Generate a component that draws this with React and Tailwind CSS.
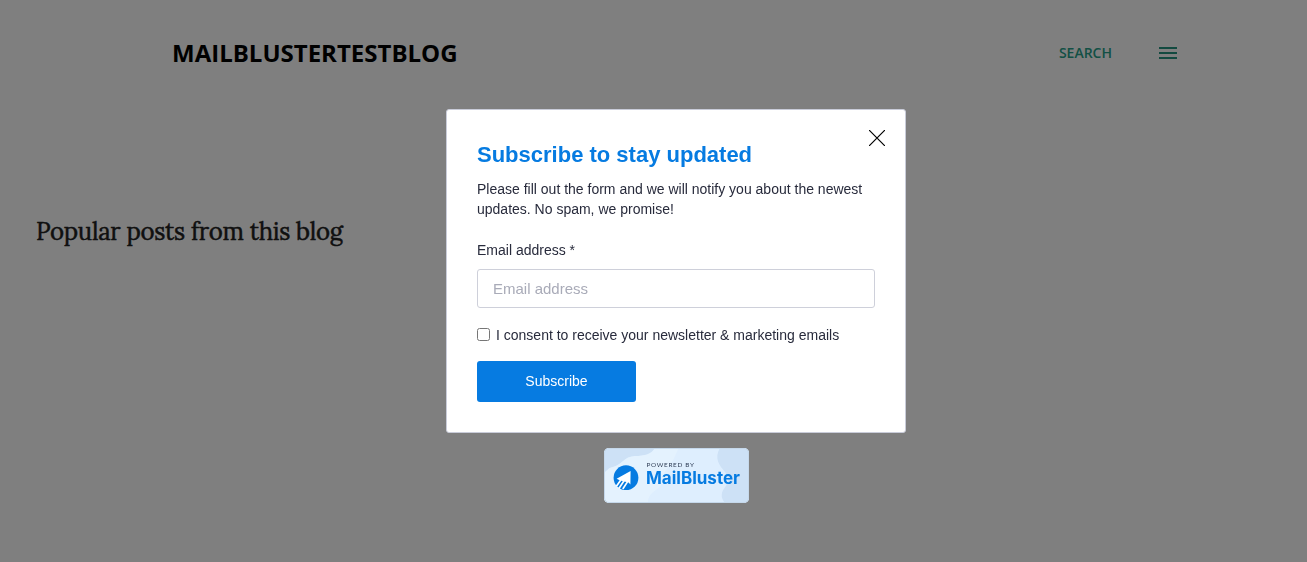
import { useState } from "react";

function BlogHeader() {
  return (
    <header className="flex items-center justify-between pt-[33px] pl-[172px] pr-[127px]">
      <h1 className="font-['Open_Sans',sans-serif] text-[24px] leading-10 font-bold uppercase text-black">
        MailBlusterTestBlog
      </h1>
      <div className="flex items-center gap-11">
        <button
          type="button"
          className="font-['Open_Sans',sans-serif] text-sm font-semibold uppercase text-[#26a08a]"
        >
          Search
        </button>
        <svg className="size-6" viewBox="0 0 24 24" fill="#269480">
          <path d="M3 18h18v-2H3v2zm0-5h18v-2H3v2zm0-7v2h18V6H3z" />
        </svg>
      </div>
    </header>
  );
}

function PoweredBy() {
  return (
    <a className="block w-[145px] h-[55px]">
      <svg width="145" height="55" viewBox="0 0 145 55">
        <clipPath id="badge">
          <rect width="145" height="55" rx="5" />
        </clipPath>
        <g clipPath="url(#badge)">
          <rect width="145" height="55" fill="#deeefe" />
          <path d="M0 0h51C48 6 40 8 31 8C19 9 18 17 9 19C4 20 3 23 0 25z" fill="#cde1f6" />
          <path
            d="M51 0C47 7 40 8 31 8C19 9 18 17 9 19C4 20 3 23 0 25V55H44C44 42 57 43 58 33C59 22 65 20 68 14C71 9 72 5 75 0z"
            fill="#e4f2fe"
          />
          <path d="M116 0C110 10 115 17 121 24C129 34 120 38 118 45C117 50 119 52 121 55H145V0z" fill="#cde1f6" />
        </g>
        <rect x="0.5" y="0.5" width="144" height="54" rx="4.5" fill="none" stroke="#c5d8eb" />
        <circle cx="22" cy="29.7" r="12.4" fill="#067be1" />
        <path d="M26.6 23L12.6 30.7L16.2 32.4L24.6 34.6L26.4 36.4z" fill="#fff" />
        <path
          d="M16.8 32L12.4 38.2M20.2 32.6L14.9 40.4M23.6 33.6L18.8 41"
          stroke="#fff"
          strokeWidth="1.7"
        />
        <text
          x="42.5"
          y="18.7"
          textLength="47.5"
          fontFamily="Lato, sans-serif"
          fontSize="6.4"
          fontWeight="400"
          fill="#2f3d55"
        >
          POWERED BY
        </text>
        <text
          x="42"
          y="36"
          textLength="94"
          lengthAdjust="spacingAndGlyphs"
          fontFamily="Inter, sans-serif"
          fontSize="17"
          fontWeight="700"
          fill="#067be1"
        >
          MailBluster
        </text>
      </svg>
    </a>
  );
}

function SubscribeForm() {
  const [email, setEmail] = useState("");
  const [consent, setConsent] = useState(false);

  return (
    <form
      onSubmit={(e) => e.preventDefault()}
      className="relative w-[460px] h-[324px] bg-white border border-[#c9ccd9] rounded-[3px] px-[30px] pt-[30px] text-sm leading-5 text-[#282b3c]"
    >
      <button type="button" aria-label="Close" className="absolute top-5 right-5">
        <svg width="16" height="16" viewBox="0 0 16 16" stroke="#000" strokeWidth="1.2">
          <path d="M0 0L16 16M16 0L0 16" />
        </svg>
      </button>
      <h2 className="text-[22px] leading-[30px] font-bold text-[#067be1]">Subscribe to stay updated</h2>
      <p className="mt-[9px]">
        Please fill out the form and we will notify you about the newest updates. No spam, we promise!
      </p>
      <label htmlFor="email" className="block mt-[21px]">
        Email address *
      </label>
      <input
        id="email"
        type="email"
        value={email}
        onChange={(e) => setEmail(e.target.value)}
        placeholder="Email address"
        className="block mt-[9px] w-full h-[39px] px-[15px] text-[15px] border border-[#ced0da] rounded-[3px] placeholder:text-[#a9abb8]"
      />
      <label className="flex items-center gap-1.5 mt-[17px]">
        <input
          type="checkbox"
          checked={consent}
          onChange={(e) => setConsent(e.target.checked)}
          className="size-[13px] mb-0.5"
        />
        I consent to receive your newsletter &amp; marketing emails
      </label>
      <button
        type="submit"
        className="block mt-4 w-[159px] h-[41px] pb-0.5 rounded-[3px] bg-[#067be1] text-white"
      >
        Subscribe
      </button>
    </form>
  );
}

export default function App() {
  return (
    <div className="h-screen overflow-hidden bg-white">
      <BlogHeader />
      <main className="pt-[141px] pl-9">
        <h3 className="font-[Lora,serif] text-2xl leading-9 tracking-[-0.28px] text-[#212121] [-webkit-text-stroke:0.5px_#212121]">
          Popular posts from this blog
        </h3>
      </main>
      <div className="fixed inset-0 flex flex-col items-center gap-[15px] bg-black/50 pt-[109px] pl-[45px] font-['Liberation_Sans',Arial,sans-serif]">
        <SubscribeForm />
        <PoweredBy />
      </div>
    </div>
  );
}
